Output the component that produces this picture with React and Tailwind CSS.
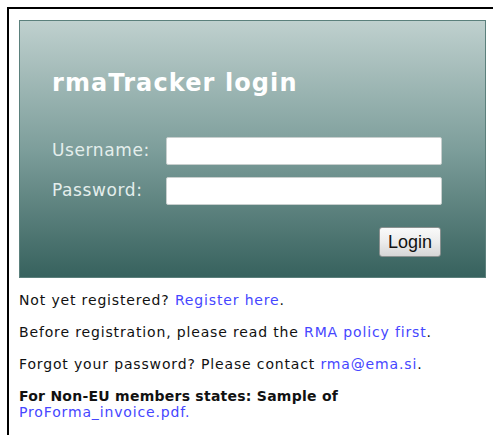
import { useState } from 'react'

export default function App() {
  const [username, setUsername] = useState('')
  const [password, setPassword] = useState('')

  return (
    <div className="w-[493px] h-[435px] bg-white pt-[7px] pl-[7px] overflow-hidden" style={{ fontFamily: '"DejaVu Sans", Verdana, sans-serif' }}>
      <div className="h-full border-t-2 border-l-2 border-black pt-[11px] pl-[10px]">
        {/* login panel */}
        <div className="w-[467px] h-[258px] border border-[#5b807c] bg-gradient-to-b from-[#bfd0ce] via-[#7d9e9b] to-[#37625e] pl-[32px] pr-[43px]">
          <h1 className="mt-[50px] text-[24px] leading-none font-bold text-white tracking-[1.1px]">rmaTracker login</h1>
          <div className="mt-[42px] flex flex-col gap-[12px]">
            <div className="flex items-center">
              <label className="w-[114px] text-[17px] text-[#e4eeec] tracking-[0.6px]">Username:</label>
              <input
                value={username}
                onChange={e => setUsername(e.target.value)}
                className="flex-1 h-[28px] bg-white border border-[#c8cfce] rounded-[2px] outline-none px-1"
              />
            </div>
            <div className="flex items-center">
              <label className="w-[114px] text-[17px] text-[#e4eeec] tracking-[0.6px]">Password:</label>
              <input
                type="password"
                value={password}
                onChange={e => setPassword(e.target.value)}
                className="flex-1 h-[28px] bg-white border border-[#c8cfce] rounded-[2px] outline-none px-1"
              />
            </div>
          </div>
          <div className="mt-[22px] flex justify-end pr-[1px]">
            <button
              className="w-[62px] h-[30px] rounded-[3px] border border-[#8a9190] bg-gradient-to-b from-[#fafafa] via-[#ececec] to-[#d6d6d6] text-[18px] text-[#111]"
              style={{ fontFamily: '"Liberation Sans", Arial, sans-serif' }}
            >
              Login
            </button>
          </div>
        </div>

        {/* help text */}
        <div className="pt-[14px] text-[14px] leading-[16px] tracking-[0.85px] text-[#111]">
          <p>Not yet registered? <a href="#" className="text-[#4646ff]">Register here</a>.</p>
          <p className="mt-[16px]">Before registration, please read the <a href="#" className="text-[#4646ff]">RMA policy first</a>.</p>
          <p className="mt-[16px]">Forgot your password? Please contact <a href="#" className="text-[#4646ff]">rma@ema.si</a>.</p>
          <p className="mt-[16px]">
            <b className="tracking-[0.25px]">For Non-EU members states: Sample of</b>
            <br />
            <a href="#" className="text-[#4646ff]">ProForma_invoice.pdf.</a>
          </p>
        </div>
      </div>
    </div>
  )
}
